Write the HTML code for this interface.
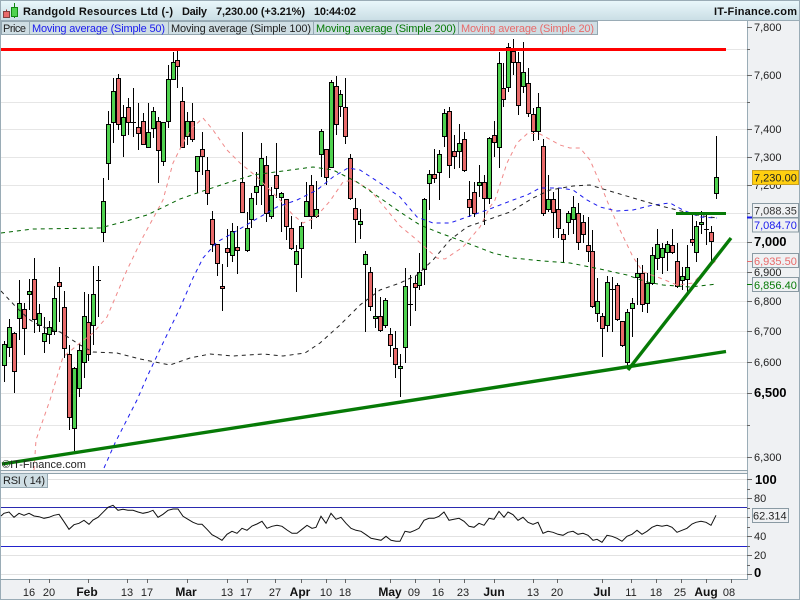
<!DOCTYPE html>
<html><head><meta charset="utf-8"><style>
html,body{margin:0;padding:0;width:800px;height:600px;overflow:hidden;background:#eff1f3}
svg{display:block;font-family:"Liberation Sans",sans-serif;font-size:11px}
.a{fill:#222}
.b{font-weight:bold;fill:#000;font-size:13px}
.m{text-anchor:middle;fill:#222}
.mb{text-anchor:middle;font-weight:bold;fill:#111;font-size:12px}
.t{font-weight:bold;font-size:11px;fill:#111}
</style></head><body>
<svg width="800" height="600" viewBox="0 0 800 600" xmlns="http://www.w3.org/2000/svg">
<defs><linearGradient id="t" x1="0" y1="0" x2="0" y2="1"><stop offset="0" stop-color="#e9f7fb"/><stop offset="1" stop-color="#c9dde4"/></linearGradient></defs>
<rect width="800" height="600" fill="#eff1f3"/>
<rect x="0.5" y="0.5" width="799" height="599" fill="none" stroke="#9aacb6"/>
<rect x="1" y="1" width="798" height="20" fill="url(#t)"/>
<path d="M0 20.5H800" stroke="#9aacb6"/>
<rect x="1" y="21" width="746" height="449" fill="#fff"/>
<rect x="1" y="474" width="746" height="105" fill="#fff"/>
<path d="M0.5 21V579M747.5 21V579" stroke="#9aacb6"/>
<path d="M0 470.5H748M0 473.5H748M0 579.5H748" stroke="#8fa2ac" stroke-width="1"/>
<!-- grid -->
<path d="M1 49.5H747M1 75.5H747M1 102.5H747M1 129.5H747M1 157.5H747M1 185.5H747M1 213.5H747M1 242.5H747M1 272.5H747M1 301.5H747M1 331.5H747M1 362.5H747M1 393.5H747M1 425.5H747M1 457.5H747" stroke="#e6e6e6" fill="none"/>
<path d="M1 479.5H747M1 498.5H747M1 517.5H747M1 536.5H747M1 555.5H747M1 574.5H747" stroke="#e2e2e2" fill="none"/>
<!-- wicks -->
<path fill="none" stroke="#000" stroke-width="1" d="M4.5 341V382M9.5 319V357M14.5 332V393M19.5 280V340M24.5 303V355M29.5 279V310M34.5 258V333M39.5 304V332M44.5 317V353M49.5 321V344M54.5 286V335M59.5 267V322M64.5 291V358M69.5 345V430M74.5 367V451M79.5 343V397M84.5 292V378M88.5 294V361M93.5 266V345M98.5 266V317M96 280.5H101M103.5 178V242M108.5 111V180M113.5 78V143M118.5 74V130M123.5 105V157M128.5 98V135M133.5 88V137M131 122.5H136M138.5 103V150M143.5 113V145M148.5 103V148M153.5 107V138M158.5 117V183M163.5 122V166M168.5 65V128M173.5 52V80M177.5 51V88M182.5 87V147M187.5 112V145M192.5 103V142M197.5 156V193M202.5 132V175M207.5 157V205M212.5 211V252M217.5 244V276M222.5 264V311M227.5 229V267M232.5 223V262M237.5 226V274M242.5 132V212M247.5 212V252M251.5 193V228M256.5 172V205M261.5 143V205M266.5 156V222M271.5 187V219M276.5 143V198M281.5 192V232M286.5 199V240M291.5 216V250M296.5 245V292M301.5 222V278M306.5 182V216M311.5 175V229M316.5 181V218M321.5 129V177M326.5 149V185M331.5 80V167M336.5 76V135M340.5 90V117M345.5 78V144M350.5 154V200M355.5 198V243M360.5 209V239M365.5 251V332M370.5 267V311M375.5 288V328M380.5 297V332M385.5 298V328M390.5 328V357M395.5 331V378M400.5 354V397M405.5 268V363M410.5 275V326M408 304.5H413M415.5 276V311M419.5 253V290M424.5 198V285M429.5 170V210M434.5 149V183M439.5 150V200M444.5 109V147M449.5 107V178M454.5 135V169M459.5 124V168M464.5 132V172M469.5 181V217M474.5 182V217M479.5 165V197M484.5 175V225M489.5 137V204M494.5 121V157M499.5 52V168M503.5 63V107M508.5 43V92M513.5 39V75M518.5 52V115M523.5 42V93M528.5 68V117M533.5 108V141M538.5 93V140M543.5 139V216M548.5 175V212M553.5 192V238M558.5 188V238M563.5 229V263M568.5 211V235M573.5 196V234M578.5 203V250M583.5 215V243M588.5 217V262M592.5 230V308M597.5 278V322M602.5 313V357M607.5 276V332M612.5 277V332M610 289.5H615M617.5 283V321M622.5 321V347M627.5 309V367M632.5 298V337M637.5 258V305M642.5 265V312M647.5 273V313M652.5 247V285M657.5 229V270M662.5 243V274M667.5 241V271M672.5 229V254M677.5 243V288M682.5 267V290M687.5 245V293M692.5 215V246M696.5 221V262M701.5 211V234M706.5 215V245M704 229.5H709M711.5 226V261M716.5 136V199"/>
<!-- green bodies -->
<path fill="#4fd24f" stroke="#000" d="M2.5 344.5h4v21h-4zM7.5 327.5h4v20h-4zM17.5 303.5h4v15h-4zM27.5 291.5h4v3h-4zM37.5 313.5h4v12h-4zM42.5 333.5h4v8h-4zM47.5 327.5h4v7h-4zM52.5 298.5h4v33h-4zM72.5 368.5h4v60h-4zM77.5 350.5h4v38h-4zM82.5 316.5h4v46h-4zM91.5 294.5h4v31h-4zM101.5 201.5h4v31h-4zM106.5 124.5h4v39h-4zM111.5 91.5h4v31h-4zM121.5 117.5h4v18h-4zM146.5 132.5h4v15h-4zM151.5 111.5h4v17h-4zM161.5 122.5h4v39h-4zM166.5 79.5h4v42h-4zM171.5 62.5h4v17h-4zM185.5 121.5h4v15h-4zM195.5 156.5h4v15h-4zM230.5 231.5h4v24h-4zM245.5 228.5h4v22h-4zM249.5 198.5h4v21h-4zM254.5 186.5h4v6h-4zM259.5 158.5h4v27h-4zM269.5 195.5h4v21h-4zM279.5 193.5h4v4h-4zM294.5 251.5h4v13h-4zM299.5 226.5h4v22h-4zM304.5 201.5h4v15h-4zM314.5 209.5h4v7h-4zM319.5 131.5h4v23h-4zM329.5 82.5h4v85h-4zM338.5 94.5h4v12h-4zM358.5 221.5h4v3h-4zM363.5 254.5h4v10h-4zM373.5 316.5h4v2h-4zM383.5 300.5h4v25h-4zM398.5 366.5h4v2h-4zM403.5 286.5h4v61h-4zM417.5 272.5h4v13h-4zM422.5 199.5h4v70h-4zM427.5 174.5h4v9h-4zM437.5 154.5h4v18h-4zM442.5 113.5h4v23h-4zM457.5 143.5h4v8h-4zM477.5 182.5h4v3h-4zM487.5 138.5h4v60h-4zM497.5 63.5h4v84h-4zM506.5 47.5h4v40h-4zM521.5 72.5h4v14h-4zM536.5 107.5h4v24h-4zM546.5 199.5h4v10h-4zM566.5 213.5h4v9h-4zM571.5 207.5h4v12h-4zM595.5 301.5h4v12h-4zM605.5 282.5h4v43h-4zM625.5 312.5h4v50h-4zM630.5 303.5h4v5h-4zM635.5 273.5h4v4h-4zM645.5 283.5h4v20h-4zM650.5 255.5h4v28h-4zM655.5 244.5h4v14h-4zM660.5 248.5h4v9h-4zM665.5 244.5h4v8h-4zM680.5 276.5h4v4h-4zM685.5 267.5h4v12h-4zM694.5 226.5h4v26h-4zM699.5 222.5h4v2h-4zM714.5 177.5h4v16h-4z"/>
<!-- red bodies -->
<path fill="#e86a6a" stroke="#000" d="M12.5 333.5h4v38h-4zM22.5 309.5h4v19h-4zM32.5 279.5h4v40h-4zM57.5 282.5h4v4h-4zM62.5 307.5h4v41h-4zM67.5 354.5h4v63h-4zM86.5 322.5h4v32h-4zM116.5 78.5h4v46h-4zM126.5 107.5h4v15h-4zM136.5 127.5h4v6h-4zM141.5 121.5h4v23h-4zM156.5 121.5h4v29h-4zM175.5 60.5h4v6h-4zM180.5 101.5h4v46h-4zM190.5 121.5h4v18h-4zM200.5 149.5h4v7h-4zM205.5 170.5h4v23h-4zM210.5 219.5h4v25h-4zM215.5 244.5h4v19h-4zM220.5 286.5h4v2h-4zM225.5 248.5h4v4h-4zM235.5 247.5h4v3h-4zM240.5 182.5h4v30h-4zM264.5 165.5h4v48h-4zM274.5 175.5h4v13h-4zM284.5 199.5h4v27h-4zM289.5 228.5h4v20h-4zM309.5 185.5h4v31h-4zM324.5 149.5h4v28h-4zM334.5 86.5h4v38h-4zM343.5 107.5h4v29h-4zM348.5 158.5h4v40h-4zM353.5 208.5h4v11h-4zM368.5 272.5h4v34h-4zM378.5 316.5h4v14h-4zM388.5 334.5h4v11h-4zM393.5 348.5h4v16h-4zM413.5 283.5h4v4h-4zM432.5 174.5h4v4h-4zM447.5 111.5h4v54h-4zM452.5 151.5h4v5h-4zM462.5 139.5h4v31h-4zM467.5 199.5h4v8h-4zM472.5 192.5h4v21h-4zM482.5 182.5h4v16h-4zM492.5 135.5h4v7h-4zM501.5 88.5h4v11h-4zM511.5 51.5h4v11h-4zM516.5 62.5h4v43h-4zM526.5 83.5h4v30h-4zM531.5 114.5h4v17h-4zM541.5 146.5h4v67h-4zM551.5 199.5h4v13h-4zM556.5 209.5h4v19h-4zM561.5 234.5h4v5h-4zM576.5 213.5h4v29h-4zM581.5 222.5h4v12h-4zM586.5 245.5h4v6h-4zM590.5 251.5h4v55h-4zM600.5 316.5h4v12h-4zM615.5 285.5h4v34h-4zM620.5 321.5h4v24h-4zM640.5 273.5h4v31h-4zM670.5 245.5h4v7h-4zM675.5 261.5h4v25h-4zM690.5 239.5h4v3h-4zM709.5 232.5h4v9h-4z"/>
<!-- moving averages -->
<g fill="none" stroke-width="1" stroke-dasharray="4 4">
<polyline stroke="#f08888" points="34,470 36,440 50,400 63,357 80,343 93,333 107,317 127,270 143,237 163,200 173,163 183,143 192,128 203,118 213,130 227,150 240,163 257,177 267,187 280,200 293,215 303,223 315,218 330,201 343,182 353,180 370,190 387,210 400,226 417,240 437,258 445,259 463,247 480,227 490,207 495,200 507,163 517,143 528,133 540,134 560,145 570,148 580,148 590,160 600,183 608,203 620,230 633,257 643,272 660,278 677,285 693,283 707,268 717,260"/>
<polyline stroke="#1a1aee" points="104,468 115,443 137,400 147,377 163,343 180,308 193,278 203,258 217,242 233,233 253,221 277,207 297,200 317,190 333,177 348,168 360,170 380,183 400,197 417,217 433,223 450,223 467,217 487,210 513,200 527,195 540,188 560,188 573,190 587,200 600,207 617,211 633,210 653,205 670,203 683,210 700,217 717,218"/>
<polyline stroke="#222" points="1,291 17,308 30,320 43,327 60,332 80,345 93,352 117,353 140,359 170,365 190,358 210,354 233,356 263,354 283,356 305,353 320,343 340,325 360,305 380,290 400,283 417,275 433,260 450,240 467,227 487,220 510,212 533,198 550,190 573,186 590,185 613,192 640,200 657,205 677,210 697,215 717,218"/>
<polyline stroke="#006400" points="1,233 33,229 100,228 123,222 147,215 180,199 200,192 227,183 253,175 283,171 313,167 333,170 357,182 383,200 400,212 420,225 440,233 467,243 493,253 513,258 543,261 570,263 600,269 627,275 647,282 663,285 690,287 717,284"/>
</g>
<!-- trend lines -->
<path d="M1 49.5H726" stroke="#f00" stroke-width="3" fill="none"/>
<path d="M2 464L726 351.5" stroke="#067a06" stroke-width="3.4" fill="none"/>
<path d="M628 370L731 238" stroke="#067a06" stroke-width="3.4" fill="none"/>
<path d="M676 213.5H726" stroke="#067a06" stroke-width="3" fill="none"/>
<!-- rsi -->
<path d="M1 507.5H747" stroke="#2a2ab0"/>
<path d="M1 546.5H747" stroke="#2222cc"/>
<polyline fill="none" stroke="#111" stroke-width="1" points="1,516 4,513.3 9,512 14,517.3 19,513.3 24,515.3 29,513.3 34,516 39,516.7 44,518.3 49,517.3 54,515.3 59,514.3 64,521.7 69,529.3 74,524.7 79,523.3 84,520.3 89,524.3 93,520 98,517.3 103,512.3 108,507.3 113,505.3 118,510.3 123,509.3 128,510.3 133,510.3 138,512 143,513.3 148,512.3 153,510.3 158,517.3 163,514.3 168,510.3 173,509 178,509 183,516.3 188,519.3 193,522.3 198,524.3 202,524.3 207,529.3 212,534.7 217,537.3 222,540.3 227,534.3 232,531.3 237,533.3 242,528.3 247,530.3 252,526 257,524 262,521.3 267,528.3 272,526.3 277,525.3 282,526.3 287,530 292,533.3 297,533.3 302,529.3 307,525.3 312,528.3 316,527.3 321,516.3 326,523.3 331,513.3 336,519.3 341,517.3 346,523.3 351,528.3 356,530.3 361,531.3 366,534.7 371,538.3 376,539.3 381,540.3 386,536.3 391,540.3 396,541.3 400,541.3 405,531.3 410,532.3 415,530.3 419,528.3 424,520.3 429,518.3 434,518.3 439,516.3 444,512 449,520.3 454,519.3 459,518.3 464,521.3 469,526.3 474,527.3 479,523.3 484,525.3 489,518.3 494,519.3 499,511.3 504,517.3 508,512 513,514.7 518,520.3 523,517.3 528,522.3 533,524.3 538,522.3 543,533.3 548,531.3 553,532.3 558,534.3 563,535.3 568,532.3 573,531.3 578,534.3 583,533.3 588,535.3 593,540.3 597,539.3 602,542.3 607,535.3 612,536.3 617,538.3 622,541.3 627,536.3 632,534.3 637,530.3 642,534.3 647,531.3 652,527.3 657,525.3 662,526.3 667,525.3 672,527.3 677,532.3 682,530.3 687,528.3 692,524 696,522.3 701,521.3 706,522.3 711,525.3 716,515.3"/>
<!-- axis ticks -->
<path stroke="#666" fill="none" d="M747 27.5h5M747 49.5h3M747 75.5h5M747 102.5h3M747 129.5h5M747 157.5h5M747 185.5h5M747 213.5h3M747 242.5h5M747 272.5h5M747 301.5h5M747 331.5h5M747 362.5h5M747 393.5h5M747 425.5h3M747 457.5h5M747 479.5h5M747 489.5h3M747 498.5h5M747 508.5h3M747 517.5h3M747 527.5h3M747 536.5h5M747 546.5h3M747 555.5h5M747 565.5h3M747 574.5h5M29.5 579v4M49.5 579v4M88.5 579v4M127.5 579v4M147.5 579v4M187.5 579v4M227.5 579v4M247.5 579v4M275.5 579v4M301.5 579v4M326.5 579v4M345.5 579v4M390.5 579v4M415.5 579v4M439.5 579v4M464.5 579v4M494.5 579v4M533.5 579v4M557.5 579v4M602.5 579v4M631.5 579v4M656.5 579v4M681.5 579v4M706.5 579v4M731.5 579v4"/>
<path d="M747 217.5h5" stroke="#1a1aee" stroke-width="2"/>
<path d="M747 261.5h5" stroke="#e86a6a"/>
<path d="M747 284.5h5" stroke="#067a06"/>
<!-- logo -->
<path d="M6.5 9.5V17" stroke="#a03030"/>
<rect x="3.5" y="11.5" width="6" height="6" fill="#e86a6a" stroke="#804040"/>
<path d="M14.5 3V18" stroke="#118811"/>
<rect x="11.5" y="7.5" width="6" height="9" fill="#4fd24f" stroke="#118811"/>
<!-- title -->
<text x="23" y="15" class="t" textLength="150">Randgold Resources Ltd (-)</text>
<text x="182" y="15" class="t" textLength="25">Daily</text>
<text x="216" y="15" class="t" textLength="89">7,230.00 (+3.21%)</text>
<text x="314" y="15" class="t" textLength="42">10:44:02</text>
<text x="714" y="15" class="t" textLength="83">IT-Finance.com</text>
<!-- legend -->
<g fill="#cfdee4" stroke="#95a8b2">
<rect x="1.5" y="21.5" width="28" height="13"/>
<rect x="29.5" y="21.5" width="139" height="13"/>
<rect x="168.5" y="21.5" width="145" height="13"/>
<rect x="313.5" y="21.5" width="145" height="13"/>
<rect x="458.5" y="21.5" width="139" height="13"/>
<rect x="0.5" y="473.5" width="47" height="14"/>
</g>
<text x="3" y="32" fill="#222" textLength="23">Price</text>
<text x="32" y="32" fill="#1a1aee" textLength="133">Moving average (Simple 50)</text>
<text x="171" y="32" fill="#222" textLength="140">Moving average (Simple 100)</text>
<text x="316" y="32" fill="#067a06" textLength="140">Moving average (Simple 200)</text>
<text x="461" y="32" fill="#e86a6a" textLength="133">Moving average (Simple 20)</text>
<text x="3" y="484" fill="#222" textLength="42">RSI ( 14)</text>
<text x="2" y="468" fill="#222">©IT-Finance.com</text>
<!-- y axis -->
<g class="a">
<text x="754" y="31">7,800</text>
<text x="754" y="79">7,600</text>
<text x="754" y="133">7,400</text>
<text x="754" y="161">7,300</text>
<text x="754" y="189">7,200</text>
<text x="754" y="276">6,900</text>
<text x="754" y="305">6,800</text>
<text x="754" y="335">6,700</text>
<text x="754" y="366">6,600</text>
<text x="754" y="461">6,300</text>
<text x="754" y="502">80</text>
<text x="754" y="540">40</text>
<text x="754" y="559">20</text>
</g>
<text x="754" y="246" class="b">7,000</text>
<text x="754" y="397" class="b">6,500</text>
<text x="755" y="484" class="b">100</text>
<text x="754" y="577" class="b">0</text>
<!-- value boxes -->
<rect x="752.5" y="170.5" width="46" height="14" fill="#ffcf10" stroke="#c9a020"/>
<text x="754" y="181.5" fill="#222">7,230.00</text>
<rect x="752.5" y="203.5" width="46" height="14" fill="#eff1f3" stroke="#8a9aa3"/>
<text x="754" y="214.5" fill="#333">7,088.35</text>
<rect x="752.5" y="218" width="46" height="14" fill="#eff1f3" stroke="#8a9aa3"/>
<text x="754" y="229" fill="#1a1aee">7,084.70</text>
<rect x="752.5" y="253.5" width="46" height="14" fill="#eff1f3" stroke="#8a9aa3"/>
<text x="754" y="265" fill="#e86a6a">6,935.50</text>
<rect x="752.5" y="277.5" width="46" height="14" fill="#eff1f3" stroke="#8a9aa3"/>
<text x="754" y="289" fill="#067a06">6,856.40</text>
<rect x="752.5" y="508.5" width="36" height="14" fill="#eff1f3" stroke="#8a9aa3"/>
<text x="753" y="519.5" fill="#222">62.314</text>
<!-- x axis -->
<g class="m">
<text x="29" y="596">16</text><text x="49" y="596">20</text><text x="127" y="596">13</text><text x="147" y="596">17</text><text x="227" y="596">13</text><text x="246" y="596">17</text><text x="275" y="596">27</text><text x="326" y="596">10</text><text x="345" y="596">18</text><text x="414" y="596">09</text><text x="438" y="596">16</text><text x="463" y="596">23</text><text x="533" y="596">13</text><text x="557" y="596">20</text><text x="631" y="596">11</text><text x="656" y="596">18</text><text x="680" y="596">25</text><text x="729" y="596">08</text>
</g>
<g class="mb">
<text x="87" y="596">Feb</text><text x="186" y="596">Mar</text><text x="300" y="596">Apr</text><text x="390" y="596">May</text><text x="494" y="596">Jun</text><text x="602" y="596">Jul</text><text x="706" y="596">Aug</text>
</g>
</svg>
</body></html>
